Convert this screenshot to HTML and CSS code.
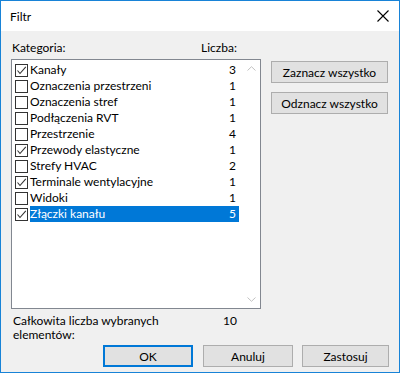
FILE: index.html
```html
<!DOCTYPE html>
<html lang="pl">
 <head>
  <meta charset="UTF-8">
  <title>Filtr</title>
  <link rel="stylesheet" href="styles.css">
 </head>
<body>

<div class="okno">

 <!-- Pasek tytulu -->
 <div class="tytul">
  <span>Filtr</span>
  <svg class="zamknij" width="12" height="12" viewBox="0 0 12 12">
   <path d="M0.5 0.5 L11.5 11.5 M11.5 0.5 L0.5 11.5" stroke="#000" stroke-width="1.1" fill="none"/>
  </svg>
 </div>

 <div class="tresc">

  <div class="gora">
   <div class="lewa">
    <div class="naglowki">
     <span class="nag-kategoria">Kategoria:</span>
     <span>Liczba:</span>
    </div>

    <div class="lista">
     <div class="wiersze">
      <div class="wiersz"><span class="pole tak"><svg viewBox="0 0 11 11"><path d="M1.5 5.5 L4 8.5 L9.8 1.8"/></svg></span><span class="opis"><span>Kanały</span><span>3</span></span></div>
      <div class="wiersz"><span class="pole"></span><span class="opis"><span>Oznaczenia przestrzeni</span><span>1</span></span></div>
      <div class="wiersz"><span class="pole"></span><span class="opis"><span>Oznaczenia stref</span><span>1</span></span></div>
      <div class="wiersz"><span class="pole"></span><span class="opis"><span>Podłączenia RVT</span><span>1</span></span></div>
      <div class="wiersz"><span class="pole"></span><span class="opis"><span>Przestrzenie</span><span>4</span></span></div>
      <div class="wiersz"><span class="pole tak"><svg viewBox="0 0 11 11"><path d="M1.5 5.5 L4 8.5 L9.8 1.8"/></svg></span><span class="opis"><span>Przewody elastyczne</span><span>1</span></span></div>
      <div class="wiersz"><span class="pole"></span><span class="opis"><span>Strefy HVAC</span><span>2</span></span></div>
      <div class="wiersz"><span class="pole tak"><svg viewBox="0 0 11 11"><path d="M1.5 5.5 L4 8.5 L9.8 1.8"/></svg></span><span class="opis"><span>Terminale wentylacyjne</span><span>1</span></span></div>
      <div class="wiersz"><span class="pole"></span><span class="opis"><span>Widoki</span><span>1</span></span></div>
      <div class="wiersz"><span class="pole tak"><svg viewBox="0 0 11 11"><path d="M1.5 5.5 L4 8.5 L9.8 1.8"/></svg></span><span class="opis wybrany"><span>Złączki kanału</span><span>5</span></span></div>
     </div>

     <!-- Pasek przewijania (nieaktywny) -->
     <div class="pasek">
      <span class="strzalka gorna"><svg width="9" height="5" viewBox="0 0 9 5"><path d="M0.5 4.5 L4.5 0.7 L8.5 4.5"/></svg></span>
      <span class="strzalka"><svg width="9" height="5" viewBox="0 0 9 5"><path d="M0.5 0.5 L4.5 4.3 L8.5 0.5"/></svg></span>
     </div>
    </div>
   </div>

   <div class="przyciski">
    <button type="button">Zaznacz wszystko</button>
    <button type="button">Odznacz wszystko</button>
   </div>
  </div>

  <div class="dol">
   <div class="suma">
    <span class="suma-opis">Całkowita liczba wybranych elementów:</span>
    <span class="suma-liczba">10</span>
   </div>
   <div class="akcje">
    <button type="button" class="domyslny">OK</button>
    <button type="button" class="anuluj">Anuluj</button>
    <button type="button" class="zastosuj">Zastosuj</button>
   </div>
  </div>

 </div>
</div>

</body>
</html>
```

FILE: styles.css
```css
html, body {
 margin: 0;
 padding: 0;
}

body {
 font-family: Lato, "Liberation Sans", Sans-Serif;
 font-size: 12px;
 color: #000000;
 background: #ffffff;
}

/* Okno */
.okno {
 width: 400px;
 height: 373px;
 box-sizing: border-box;
 border: solid 1px #1883d7;
 display: flex;
 flex-direction: column;
}

.tytul {
 height: 30px;
 flex: none;
 display: flex;
 align-items: center;
 justify-content: space-between;
 padding: 0 10px 0 9px;
 background: #ffffff;
}

.zamknij {
 margin-top: -1px;
 margin-right: 0px;
}

.tresc {
 flex: 1;
 background: #f0f0f0;
 padding: 9px 10px 0 10px;
 display: flex;
 flex-direction: column;
}

/* Gorna czesc */
.gora {
 display: flex;
 gap: 10px;
 align-items: flex-start;
}

.naglowki {
 display: flex;
 height: 15px;
 line-height: 15px;
 padding-left: 1px;
 margin-bottom: 4px;
}

.nag-kategoria {
 width: 189px;
}

/* Lista */
.lista {
 width: 250px;
 height: 250px;
 box-sizing: border-box;
 border: solid 1px #828790;
 background: #ffffff;
 display: flex;
}

.wiersze {
 flex: 1;
 padding: 2px 4px 0 3px;
}

.wiersz {
 display: flex;
 align-items: center;
 height: 16px;
}

.pole {
 width: 13px;
 height: 13px;
 box-sizing: border-box;
 border: solid 1px #333333;
 background: #ffffff;
 margin-right: 2px;
 display: flex;
 align-items: center;
 justify-content: center;
}

.pole svg {
 width: 11px;
 height: 11px;
}

.pole svg path {
 fill: none;
 stroke: #333333;
 stroke-width: 1.1;
}

.opis {
 flex: 1;
 height: 16px;
 line-height: 16px;
 display: flex;
 justify-content: space-between;
 padding-right: 3px;
}

.opis.wybrany {
 background: #0078d7;
 color: #ffffff;
}

.pasek {
 width: 17px;
 display: flex;
 flex-direction: column;
 justify-content: space-between;
 background: #ffffff;
}

.strzalka {
 height: 17px;
 display: flex;
 align-items: center;
 justify-content: center;
}

.strzalka path {
 fill: none;
 stroke: #c2c2c2;
 stroke-width: 1;
}

/* Przyciski */
button {
 font-family: inherit;
 font-size: 12px;
 color: #000000;
 background: #e1e1e1;
 border: solid 1px #adadad;
 border-radius: 0;
 height: 22px;
 padding: 0;
 margin: 0;
}

.przyciski {
 display: flex;
 flex-direction: column;
 gap: 9px;
 padding-top: 21px;
}

.przyciski button {
 width: 117px;
}

/* Dolna czesc */
.dol {
 display: flex;
 flex-direction: column;
}

.suma {
 display: flex;
 margin-top: 5px;
 line-height: 14px;
 padding-left: 2px;
}

.suma-opis {
 width: 210px;
 padding-right: 50px;
 box-sizing: border-box;
}

.akcje {
 display: flex;
 justify-content: flex-end;
 margin-top: 3px;
}

.akcje button {
 width: 90px;
}

.akcje .domyslny {
 border-color: #0078d7;
 box-shadow: inset 0 0 0 1px #0078d7;
}

.akcje .anuluj {
 margin-left: 10px;
}

.akcje .zastosuj {
 width: 87px;
 margin-left: 9px;
}
```
